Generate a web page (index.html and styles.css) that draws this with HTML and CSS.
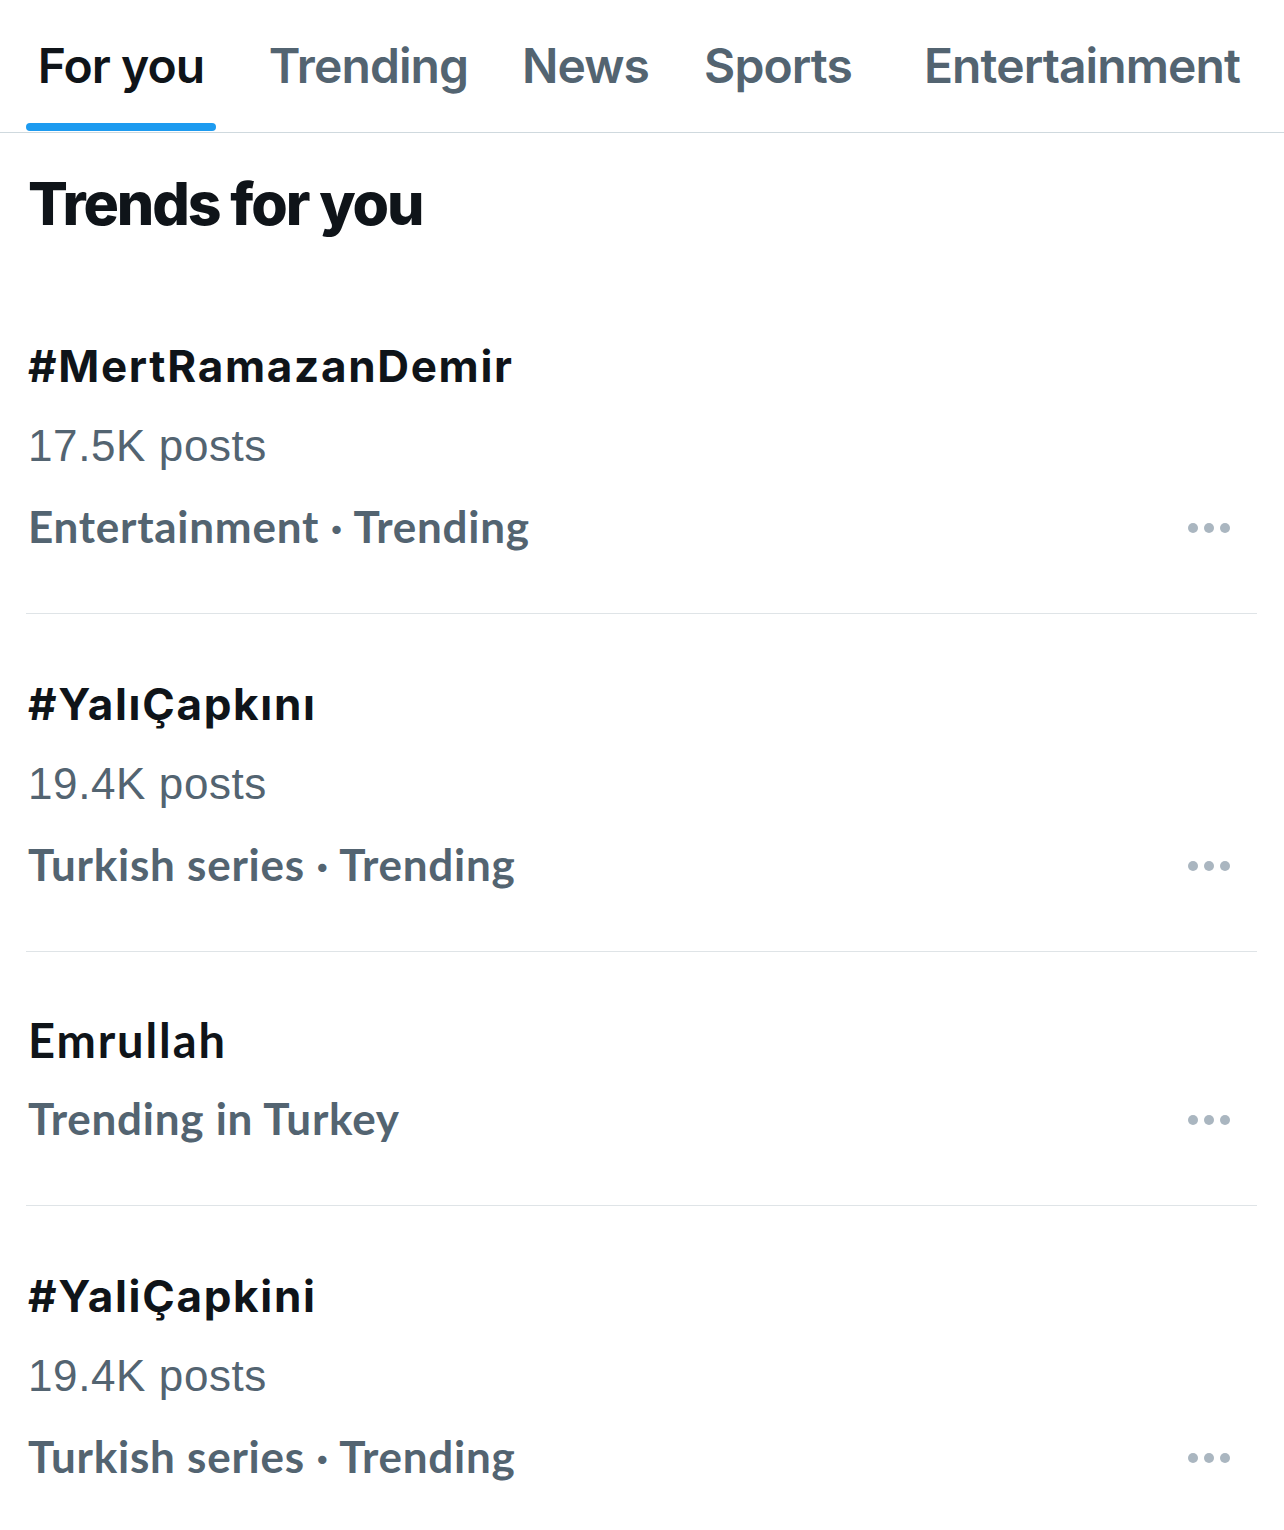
FILE: index.html
```html
<!DOCTYPE html>
<html lang="en">
<head>
<meta charset="utf-8">
<title>Explore</title>
<link rel="stylesheet" href="styles.css">
</head>
<body>
<div class="page">
  <nav class="tabs">
    <div class="tab active">For you</div>
    <div class="tab">Trending</div>
    <div class="tab">News</div>
    <div class="tab">Sports</div>
    <div class="tab">Entertainment</div>
  </nav>

  <h1 class="heading">Trends for you</h1>

  <ul class="trends">
    <li class="trend">
      <div class="trend-body">
        <div class="trend-title">#MertRamazanDemir</div>
        <div class="trend-count">17.5K posts</div>
        <div class="trend-meta">Entertainment · Trending</div>
      </div>
      <div class="more"><span class="dot"></span><span class="dot"></span><span class="dot"></span></div>
    </li>
    <li class="trend">
      <div class="trend-body">
        <div class="trend-title">#YalıÇapkını</div>
        <div class="trend-count">19.4K posts</div>
        <div class="trend-meta">Turkish series · Trending</div>
      </div>
      <div class="more"><span class="dot"></span><span class="dot"></span><span class="dot"></span></div>
    </li>
    <li class="trend">
      <div class="trend-body">
        <div class="trend-title alt">Emrullah</div>
        <div class="trend-meta">Trending in Turkey</div>
      </div>
      <div class="more"><span class="dot"></span><span class="dot"></span><span class="dot"></span></div>
    </li>
    <li class="trend last">
      <div class="trend-body">
        <div class="trend-title">#YaliÇapkini</div>
        <div class="trend-count">19.4K posts</div>
        <div class="trend-meta">Turkish series · Trending</div>
      </div>
      <div class="more"><span class="dot"></span><span class="dot"></span><span class="dot"></span></div>
    </li>
  </ul>
</div>
</body>
</html>
```

FILE: styles.css
```css
* { box-sizing: border-box; }

html, body {
  margin: 0;
  padding: 0;
  background: #ffffff;
}

.page {
  width: 1284px;
  min-height: 1530px;
  background: #ffffff;
  color: #0f1419;
  font-family: Inter, "Noto Sans", sans-serif;
}

/* Tabs */
.tabs {
  display: grid;
  grid-template-columns: 190px 305px 129px 256px 352px;
  padding-left: 26px;
  border-bottom: 1px solid #cfd9de;
  height: 133px;
}

.tab {
  position: relative;
  height: 132px;
  padding-top: 36px;
  text-align: center;
  font-size: 48px;
  line-height: 60px;
  font-weight: 600;
  letter-spacing: -0.9px;
  color: #536471;
  white-space: nowrap;
}

.tab.active {
  color: #0f1419;
}

.tab.active::after {
  content: "";
  position: absolute;
  left: 0;
  right: 0;
  bottom: 1px;
  height: 8px;
  border-radius: 4px;
  background: #1d9bf0;
}

/* Heading */
.heading {
  margin: 0;
  padding: 31px 28px 32px;
  font-size: 59px;
  line-height: 80px;
  font-weight: 800;
  letter-spacing: -2.1px;
  color: #0f1419;
}

/* Trends list */
.trends {
  list-style: none;
  margin: 0;
  padding: 0;
}

.trend {
  display: flex;
  align-items: flex-end;
  margin: 0 27px 0 26px;
  padding: 50px 0 47px;
  border-bottom: 1px solid #dfe4e7;
}

.trend.last {
  border-bottom: none;
}

.trend-body {
  flex: 1;
  padding-left: 2px;
}

.trend-title {
  font-family: Inter, sans-serif;
  font-size: 44px;
  line-height: 80px;
  font-weight: 700;
  letter-spacing: 1.7px;
  color: #0f1419;
}

.trend-title.alt {
  font-family: Lato, sans-serif;
  font-size: 47px;
  line-height: 76px;
  letter-spacing: 1.9px;
}

.trend-count {
  font-family: "Liberation Sans", Arial, sans-serif;
  font-size: 44px;
  line-height: 80px;
  color: #536471;
  letter-spacing: 0.6px;
}

.trend-meta {
  font-family: Lato, sans-serif;
  font-size: 44px;
  line-height: 80px;
  font-weight: 700;
  letter-spacing: 0.75px;
  color: #536471;
}

.more {
  display: flex;
  align-items: center;
  gap: 6px;
  height: 80px;
  padding-top: 4px;
  margin-right: 27px;
}

.dot {
  width: 10px;
  height: 10px;
  border-radius: 50%;
  background: #aab6c0;
}
```
